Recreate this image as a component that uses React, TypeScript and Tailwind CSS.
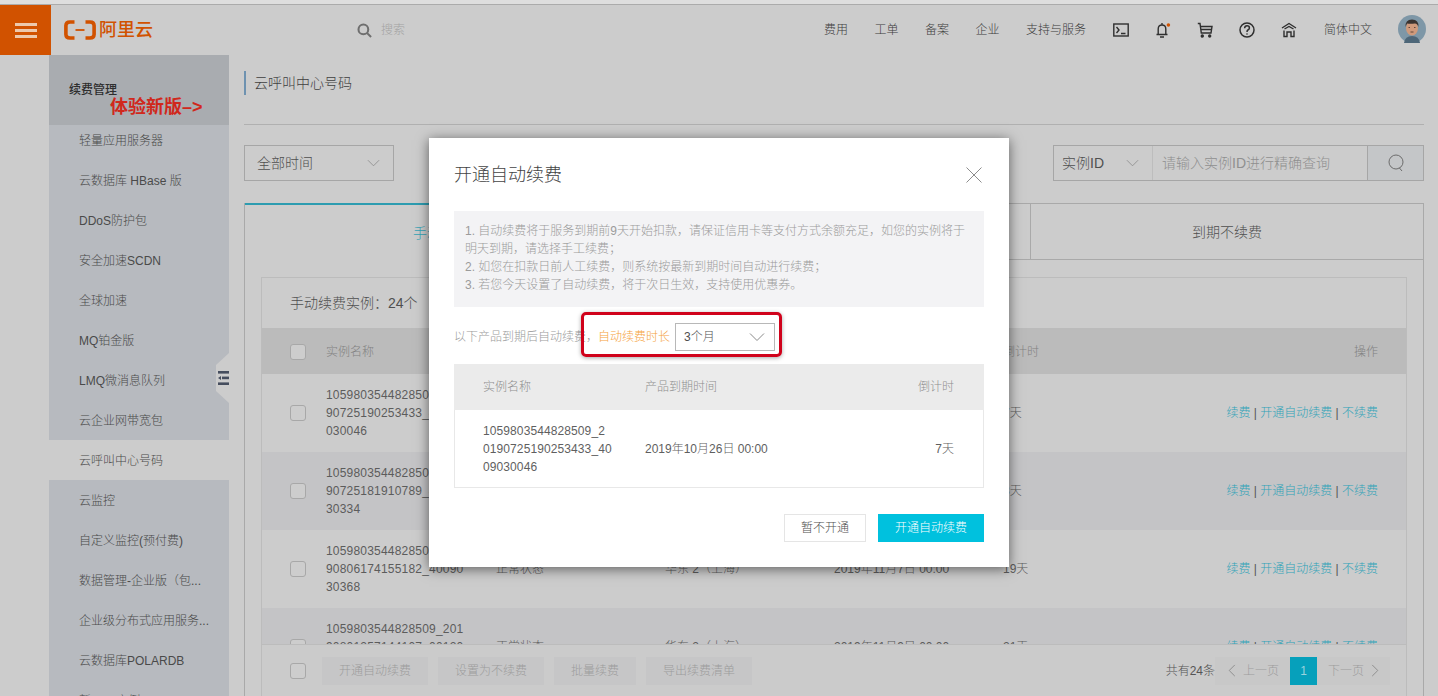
import React from "react";

const sideItems = [
  "轻量应用服务器",
  "云数据库 HBase 版",
  "DDoS防护包",
  "安全加速SCDN",
  "全球加速",
  "MQ铂金版",
  "LMQ微消息队列",
  "云企业网带宽包",
  "云呼叫中心号码",
  "云监控",
  "自定义监控(预付费)",
  "数据管理-企业版\uFF08包...",
  "企业级分布式应用服务...",
  "云数据库POLARDB",
  "新BGP实例IP",
];

const rows = [
  { name: ["1059803544828509_201", "90725190253433_4009", "030046"], date: "2019年10月26日 00:00", left: "7天", bg: "bg-[#cccccc]" },
  { name: ["1059803544828509_201", "90725181910789_40090", "30334"], date: "2019年10月27日 00:00", left: "8天", bg: "bg-[#c4c4c6]" },
  { name: ["1059803544828509_201", "90806174155182_40090", "30368"], date: "2019年11月7日 00:00", left: "19天", bg: "bg-[#cccccc]" },
  { name: ["1059803544828509_201", "90801257144107_00120", "30412"], date: "2019年11月9日 00:00", left: "21天", bg: "bg-[#c4c4c6]" },
];

const rowGrid = "grid grid-cols-[36px_170px_169px_169px_169px_1fr] items-center pl-[28px] pr-[28px]";

function Chevron({ className }: { className: string }) {
  return (
    <svg viewBox="0 0 16 10" fill="none" stroke="currentColor" strokeWidth="1" className={className}>
      <path d="M1 1.5 L8 8.5 L15 1.5" />
    </svg>
  );
}

function Checkbox() {
  return <span className="block h-4 w-4 rounded-[3px] border border-[#a8a8a8] bg-[#cdcdcd]" />;
}

function Logo() {
  return (
    <svg viewBox="0 0 32 20" fill="none" stroke="#d15200" className="h-5 w-8">
      <path d="M10.5 2 H6 Q2 2 1.9 5.5 L1.9 14.5 Q2 18 6 18 H10.5" strokeWidth="3.6" />
      <path d="M21.5 2 H26 Q30 2 30.1 5.5 L30.1 14.5 Q30 18 26 18 H21.5" strokeWidth="3.6" />
      <path d="M11.5 10 H20.5" strokeWidth="1.8" />
    </svg>
  );
}

function TopIcons() {
  return (
    <div className="ml-[27px] flex items-center gap-[26px] text-[#2f2f2f]">
      <svg viewBox="0 0 16 14" fill="none" stroke="currentColor" strokeWidth="1.4" className="h-[14px] w-4">
        <rect x="0.8" y="1" width="14.4" height="12" />
        <path d="M3.5 4 L6 7 L3.5 10 M8 10.5 H12.5" />
      </svg>
      <svg viewBox="0 0 16 16" fill="none" stroke="currentColor" strokeWidth="1.4" className="h-4 w-4">
        <path d="M1.5 12.5 H12.5 M3.2 12.5 V7 Q3.2 3 7 3 Q10.8 3 10.8 7 V12.5 M7 1 V3 M5 15 H9" />
        <circle cx="13.4" cy="3" r="1.8" fill="#d15200" stroke="none" />
      </svg>
      <svg viewBox="0 0 16 16" fill="none" stroke="currentColor" strokeWidth="1.4" className="h-4 w-4">
        <path d="M0.8 1.5 H3 L4.3 11 H14 L15 4.5 H3.4 M3.8 7.5 H14.5" />
        <circle cx="5.3" cy="14" r="1" fill="currentColor" />
        <circle cx="12.7" cy="14" r="1" fill="currentColor" />
      </svg>
      <svg viewBox="0 0 16 16" fill="none" stroke="currentColor" strokeWidth="1.5" className="h-4 w-4">
        <circle cx="8" cy="8" r="7" />
        <path d="M5.6 6.2 Q5.8 3.8 8 3.8 Q10.4 3.8 10.4 5.9 Q10.4 7.2 8.9 8 Q8 8.5 8 10" />
        <circle cx="8" cy="12" r="0.8" fill="currentColor" stroke="none" />
      </svg>
      <svg viewBox="0 0 16 16" fill="none" stroke="currentColor" strokeWidth="1.4" className="h-4 w-4">
        <path d="M1 6 L8 1.5 L15 6 M3.5 7 L8 4.5 L12.5 7 M3 8.5 V14.5 H6 V10 H10 V14.5 H13 V8.5" />
      </svg>
    </div>
  );
}

function Avatar() {
  return (
    <svg viewBox="0 0 28 28" className="h-7 w-7">
      <circle cx="14" cy="14" r="14" fill="#7e97a7" />
      <path d="M6 28 Q7 21 14 21 Q21 21 22 28 Z" fill="#4d6678" />
      <ellipse cx="14" cy="13" rx="6" ry="7.5" fill="#cf9a7c" />
      <path d="M7.6 12 Q7 4.5 14 4.5 Q21 4.5 20.4 12 Q19.5 8.5 17 8.5 Q12 9 9 8.5 Q8.2 10 7.6 12 Z" fill="#3a3330" />
      <path d="M10.5 12.5 H12 M16 12.5 H17.5 M12.5 17 H15.5" stroke="#4a3328" strokeWidth="0.8" />
    </svg>
  );
}

function Header() {
  return (
    <header className="flex h-[50px] shrink-0 items-center bg-[#cccccc]">
      <div className="flex h-full w-[51px] shrink-0 flex-col items-center justify-center gap-[3px] bg-[#d15200]">
        <span className="block h-[3px] w-[22px] bg-[#edc9ad]" />
        <span className="block h-[3px] w-[22px] bg-[#edc9ad]" />
        <span className="block h-[3px] w-[22px] bg-[#edc9ad]" />
      </div>
      <div className="ml-[13px] flex items-center gap-[3px]">
        <Logo />
        <span className="text-[18px] font-medium leading-5 text-[#d15200]">阿里云</span>
      </div>
      <svg viewBox="0 0 16 16" fill="none" stroke="#6f6f6f" strokeWidth="2.2" className="ml-[204px] h-[15px] w-[15px]">
        <circle cx="6.8" cy="6.8" r="5.2" />
        <path d="M10.8 10.8 L15 15" />
      </svg>
      <span className="ml-[9px] text-xs text-[#a3a3a3]">搜索</span>
      <nav className="ml-auto flex items-center gap-[26.5px] text-xs text-[#3d3d3d]">
        <span>费用</span>
        <span>工单</span>
        <span>备案</span>
        <span>企业</span>
        <span>支持与服务</span>
      </nav>
      <TopIcons />
      <span className="ml-[27px] text-xs text-[#3d3d3d]">简体中文</span>
      <div className="ml-[26px] mr-3 -mt-[2px]">
        <Avatar />
      </div>
    </header>
  );
}

function Sidebar() {
  return (
    <aside className="relative ml-[49px] w-[180px] shrink-0 bg-[#b7babf]">
      <div className="h-[70px] bg-[#a9acb0] pl-5 pt-[27px]">
        <div className="text-xs font-medium leading-[16px] text-[#2e2e2e]">续费管理</div>
        <div className="-mt-[1px] pl-[41px] text-[18px] font-bold leading-[20px] text-[#d0281c]">体验新版–&gt;</div>
      </div>
      <ul className="-mt-[5px]">
        {sideItems.map((item) => (
          <li
            key={item}
            className={`relative h-10 whitespace-nowrap pl-[30px] pt-px text-xs leading-10 text-[#4a4a4a] ${item === "云呼叫中心号码" ? "bg-[#cccccc]" : ""}`}
          >
            {item}
          </li>
        ))}
      </ul>
      <div className="absolute right-0 top-[298px] flex h-[50px] w-[13px] items-center justify-end bg-[#cccccc] [clip-path:polygon(100%_0,100%_100%,0_76%,0_24%)]">
        <svg viewBox="0 0 11 14" className="h-[14px] w-[11px]" fill="#454d5e">
          <rect x="0" y="0" width="11" height="2.6" />
          <rect x="4" y="5.6" width="7" height="2.6" />
          <rect x="0" y="11.4" width="11" height="2.6" />
          <path d="M0 7 L3 5 V9 Z" />
        </svg>
      </div>
    </aside>
  );
}

function Filters() {
  return (
    <div className="mt-5 flex h-9 shrink-0 justify-between">
      <div className="flex w-[150px] items-center justify-between border border-[#a6a6a6] pl-3 pr-[13px] text-sm text-[#4f4f4f]">
        <span>全部时间</span>
        <Chevron className="h-2 w-[13px] text-[#8a8a8a]" />
      </div>
      <div className="flex w-[371px] border border-[#a6a6a6] text-sm">
        <div className="flex w-[99px] items-center justify-between border-r border-[#bdbdbd] pl-2 pr-[13px] text-[#4f4f4f]">
          <span>实例ID</span>
          <Chevron className="h-2 w-[13px] text-[#8a8a8a]" />
        </div>
        <div className="flex flex-1 items-center pl-[9px] text-[#8f8f8f]">请输入实例ID进行精确查询</div>
        <div className="flex w-14 items-center justify-center border-l border-[#a6a6a6] bg-[#c4c6c8]">
          <svg viewBox="0 0 16 18" fill="none" stroke="#6c6c6c" strokeWidth="1" className="h-[18px] w-4">
            <circle cx="8" cy="8" r="7" />
            <path d="M11 13.5 L14 17" />
          </svg>
        </div>
      </div>
    </div>
  );
}

function Tabs() {
  return (
    <div className="grid h-[57px] shrink-0 grid-cols-[392px_393px_1fr] text-sm text-[#4f4f4f]">
      <div className="flex items-center justify-center border-t-2 border-[#2d9cb0] text-[#35a3b6]">手动续费</div>
      <div className="flex items-center justify-center border-b border-t border-[#a9a9a9]">自动续费</div>
      <div className="flex items-center justify-center border-b border-l border-t border-[#a9a9a9]">到期不续费</div>
    </div>
  );
}

function BackTable() {
  return (
    <div className="mx-4 mt-[17px] flex min-h-0 flex-1 flex-col border-x border-t border-[#bcbcbc]">
      <div className="flex h-[50px] shrink-0 items-center pl-[28px] text-sm text-[#4f4f4f]">手动续费实例&#xFF1A;24个</div>
      <div className={`${rowGrid} h-[46px] shrink-0 bg-[#bbbbbb] pt-[2px] text-xs text-[#828282]`}>
        <Checkbox />
        <span>实例名称</span>
        <span>状态</span>
        <span>地域</span>
        <span>产品到期时间</span>
        <div className="flex justify-between">
          <span>倒计时</span>
          <span>操作</span>
        </div>
      </div>
      <div className="min-h-0 flex-1 overflow-hidden">
        {rows.map((r) => (
          <div key={r.name[1]} className={`${rowGrid} ${r.bg} h-[78px] text-xs leading-[18px] text-[#5c5c5c]`}>
            <Checkbox />
            <div className="whitespace-nowrap tracking-[0.2px]">
              {r.name.map((line) => (
                <div key={line}>{line}</div>
              ))}
            </div>
            <span>正常状态</span>
            <span>华东 2&#xFF08;上海&#xFF09;</span>
            <span>{r.date}</span>
            <div className="flex justify-between">
              <span>{r.left}</span>
              <span className="text-[#30a3b8]">
                续费 <span className="text-[#555]">|</span> 开通自动续费 <span className="text-[#555]">|</span> 不续费
              </span>
            </div>
          </div>
        ))}
      </div>
      <div className="flex h-[52px] shrink-0 items-center border-t border-[#bcbcbc] bg-[#cbcbcb] pl-[28px] pr-4 text-xs">
        <Checkbox />
        <div className="ml-4 flex gap-[10px] text-[#9c9c9c]">
          <span className="flex h-7 w-[106px] items-center justify-center bg-[#c6c6c7]">开通自动续费</span>
          <span className="flex h-7 w-[106px] items-center justify-center bg-[#c6c6c7]">设置为不续费</span>
          <span className="flex h-7 w-[82px] items-center justify-center bg-[#c6c6c7]">批量续费</span>
          <span className="flex h-7 w-[106px] items-center justify-center bg-[#c6c6c7]">导出续费清单</span>
        </div>
        <span className="ml-auto text-[#555]">共有24条</span>
        <div className="flex h-7 w-[175px] items-center bg-[#c8c8c8] text-[#9c9c9c]">
          <svg viewBox="0 0 8 14" fill="none" stroke="#8a8a8a" className="ml-[13px] h-[13px] w-2">
            <path d="M7 1 L1 7 L7 13" />
          </svg>
          <span className="ml-[7px]">上一页</span>
          <span className="ml-[11px] flex h-7 w-[27px] items-center justify-center bg-[#06a0bb] text-[#9ad3de]">1</span>
          <span className="ml-[11px]">下一页</span>
          <svg viewBox="0 0 8 14" fill="none" stroke="#8a8a8a" className="ml-[7px] h-[13px] w-2">
            <path d="M1 1 L7 7 L1 13" />
          </svg>
        </div>
      </div>
    </div>
  );
}

function Modal() {
  return (
    <div className="absolute left-[429px] top-[138px] h-[429px] w-[580px] bg-white px-[25px] shadow-[0_2px_12px_rgba(0,0,0,0.55)]">
      <div className="flex h-[73px] items-center justify-between pr-[2px]">
        <h2 className="text-lg font-light text-[#444]">开通自动续费</h2>
        <svg viewBox="0 0 16 16" fill="none" stroke="#8c8c8c" strokeWidth="1" className="h-4 w-4">
          <path d="M0.5 0.5 L15.5 15.5 M15.5 0.5 L0.5 15.5" />
        </svg>
      </div>
      <div className="h-[96px] bg-[#f3f3f5] pb-[10px] pl-[11px] pr-[14px] pt-[11px] text-xs leading-[18px] text-[#9b9b9b]">
        <p>1. 自动续费将于服务到期前9天开始扣款&#xFF0C;请保证信用卡等支付方式余额充足&#xFF0C;如您的实例将于明天到期&#xFF0C;请选择手工续费&#xFF1B;</p>
        <p>2. 如您在扣款日前人工续费&#xFF0C;则系统按最新到期时间自动进行续费&#xFF1B;</p>
        <p>3. 若您今天设置了自动续费&#xFF0C;将于次日生效&#xFF0C;支持使用优惠券。</p>
      </div>
      <div className="relative mt-4 flex h-7 items-center text-xs">
        <span className="w-[144px] text-[#9b9b9b]">以下产品到期后自动续费&#xFF0C;</span>
        <span className="text-[#f5a33e]">自动续费时长</span>
        <div className="ml-[5px] flex h-7 w-[100px] items-center justify-between border border-[#b8b8b8] pl-2 pr-[9px] text-[#4f4f4f]">
          <span>3个月</span>
          <Chevron className="h-[10px] w-4 text-[#8a8a8a]" />
        </div>
        <div className="absolute left-[127px] top-[-11px] h-[45px] w-[201px] rounded-[5px] border-[3px] border-[#d0021b] shadow-[0_1px_4px_rgba(0,0,0,0.35)]" />
      </div>
      <div className="mt-[13px] grid h-[46px] grid-cols-[162px_1fr_auto] items-center bg-[#ebebeb] pl-[29px] pr-[30px] text-xs text-[#8f8f8f]">
        <span>实例名称</span>
        <span>产品到期时间</span>
        <span>倒计时</span>
      </div>
      <div className="grid h-[78px] grid-cols-[162px_1fr_auto] items-center border-x border-b border-[#e8e8e8] pl-[28px] pr-[29px] text-xs leading-[18px] text-[#5f5f5f]">
        <div className="whitespace-nowrap tracking-[0.1px]">
          <div>1059803544828509_2</div>
          <div>0190725190253433_40</div>
          <div>09030046</div>
        </div>
        <span>2019年10月26日 00:00</span>
        <span>7天</span>
      </div>
      <div className="mt-[26px] flex justify-end gap-3 text-xs">
        <span className="flex h-7 w-[82px] items-center justify-center border border-[#e5e5e5] text-[#4f4f4f]">暂不开通</span>
        <span className="flex h-7 w-[106px] items-center justify-center bg-[#00c1de] text-white">开通自动续费</span>
      </div>
    </div>
  );
}

export default function App() {
  return (
    <div className="relative flex h-[696px] w-[1438px] flex-col overflow-hidden bg-[#cccccc] font-light [font-family:'Liberation_Sans','Noto_Sans_CJK_SC',sans-serif]">
      <div className="h-[5px] shrink-0 border-b border-[#ababab] bg-[#dedede]" />
      <Header />
      <div className="flex min-h-0 flex-1">
        <Sidebar />
        <main className="flex min-w-0 flex-1 flex-col pl-[15px] pr-[14px]">
          <div className="h-[70px] shrink-0 border-b border-[#b0b0b0] pt-4">
            <div className="flex h-6 items-center border-l-2 border-[#6e92b0] pl-2 text-sm text-[#3f3f3f]">云呼叫中心号码</div>
          </div>
          <Filters />
          <div className="mt-[22px] flex min-h-0 flex-1 flex-col border-x border-[#a9a9a9]">
            <Tabs />
            <BackTable />
          </div>
        </main>
      </div>
      <Modal />
    </div>
  );
}
